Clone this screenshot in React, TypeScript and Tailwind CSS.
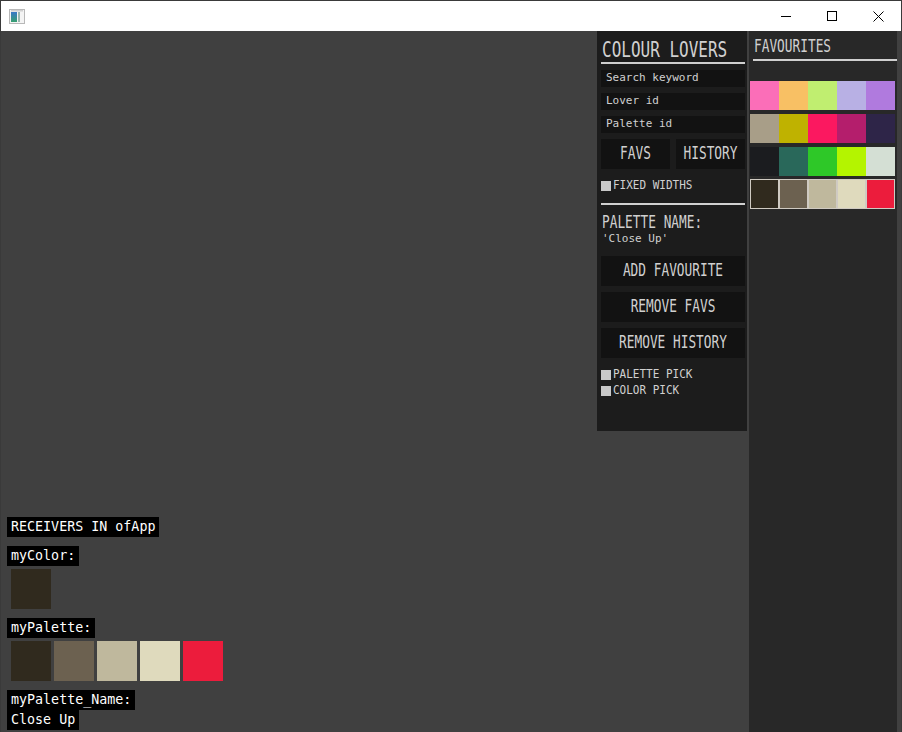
import React from "react";

const favRows = [
  ["#fb6eb8", "#f8c064", "#c0ee70", "#b8b0e4", "#b07ade"],
  ["#a89e88", "#bfb200", "#fb1860", "#b41e6c", "#2e2548"],
  ["#1b1c1f", "#29685a", "#2ec828", "#b4f400", "#d4dfd4"],
];

const palette = ["#302a1e", "#6c6150", "#bfb89d", "#dfdabd", "#ec1c3c"];

const Tall = ({ children, big }: { children: React.ReactNode; big?: boolean }) => (
  <span
    className={
      big
        ? "inline-block text-[16px] leading-[24px] scale-y-[1.3]"
        : "inline-block text-[12.8px] leading-[20px] scale-y-[1.35]"
    }
  >
    {children}
  </span>
);

const Field = ({ label }: { label: string }) => (
  <div className="mt-[6px] flex h-[17px] items-center bg-[#121212] pl-[5px] text-[11px] text-[#d0d0d0]">
    {label}
  </div>
);

const Button = ({ label, className = "" }: { label: string; className?: string }) => (
  <div
    className={`flex h-[30px] items-center justify-center bg-[#121212] text-[#d0d0d0] ${className}`}
  >
    <Tall>{label}</Tall>
  </div>
);

const Check = ({ label, className = "" }: { label: string; className?: string }) => (
  <div className={`flex h-[10px] items-center gap-[2px] ${className}`}>
    <div className="h-[10px] w-[10px] bg-[#c8c8c8]" />
    <span className="inline-block text-[11px] leading-[12px] scale-y-110 text-[#d0d0d0]">
      {label}
    </span>
  </div>
);

const Label = ({ text }: { text: string }) => (
  <div className="h-[20px] self-start bg-black px-[4px] text-[13.33px] leading-[20px] text-white">
    {text}
  </div>
);

function TitleBar() {
  return (
    <div className="flex h-[30px] items-center bg-white">
      <svg width="16" height="15" viewBox="0 0 16 15" className="ml-[8px]">
        <rect x="0.5" y="0.5" width="15" height="14" fill="#f4f4f4" stroke="#b8b8b8" />
        <rect x="2" y="3" width="6" height="10" fill="url(#g)" />
        <rect x="9" y="3" width="2" height="10" fill="#9ab8b0" />
        <rect x="2" y="1" width="12" height="1.5" fill="#d0d0d0" />
        <defs>
          <linearGradient id="g" x1="0" y1="0" x2="0" y2="1">
            <stop offset="0" stopColor="#3a78c8" />
            <stop offset="1" stopColor="#38a070" />
          </linearGradient>
        </defs>
      </svg>
      <div className="ml-auto flex h-full">
        <div className="flex w-[46px] items-center justify-center">
          <svg width="10" height="10" viewBox="0 0 10 10">
            <path d="M0 5.5h10" stroke="#000" strokeWidth="1" />
          </svg>
        </div>
        <div className="flex w-[46px] items-center justify-center">
          <svg width="10" height="10" viewBox="0 0 10 10">
            <rect x="0.5" y="0.5" width="9" height="9" fill="none" stroke="#000" strokeWidth="1" />
          </svg>
        </div>
        <div className="flex w-[46px] items-center justify-center">
          <svg width="11" height="11" viewBox="0 0 11 11">
            <path d="M0.5 0.5l10 10M10.5 0.5l-10 10" stroke="#000" strokeWidth="1" />
          </svg>
        </div>
      </div>
    </div>
  );
}

function ColourLovers() {
  return (
    <div className="flex h-[400px] w-[150px] shrink-0 flex-col bg-[#1c1c1c] pl-[4px] pr-[2px] text-[#d0d0d0]">
      <div className="flex h-[31px] items-center pt-[6px] pl-[1px]">
        <Tall big>COLOUR LOVERS</Tall>
      </div>
      <div className="h-[2px] bg-[#d0d0d0]" />
      <Field label="Search keyword" />
      <Field label="Lover id" />
      <Field label="Palette id" />
      <div className="mt-[6px] flex gap-[6px]">
        <Button label="FAVS" className="flex-1" />
        <Button label="HISTORY" className="flex-1" />
      </div>
      <Check label="FIXED WIDTHS" className="mt-[12px]" />
      <div className="mt-[12px] h-[2px] bg-[#d0d0d0]" />
      <div className="mt-[8px] flex h-[20px] items-center pl-[1px]">
        <Tall>PALETTE NAME:</Tall>
      </div>
      <div className="flex h-[13px] items-center pl-[1px] text-[11px]">'Close Up'</div>
      <Button label="ADD FAVOURITE" className="mt-[10px]" />
      <Button label="REMOVE FAVS" className="mt-[6px]" />
      <Button label="REMOVE HISTORY" className="mt-[6px]" />
      <Check label="PALETTE PICK" className="mt-[12px]" />
      <Check label="COLOR PICK" className="mt-[6px]" />
    </div>
  );
}

function Favourites() {
  return (
    <div className="ml-[2px] flex w-[148px] shrink-0 flex-col bg-[#282828] text-[#d0d0d0]">
      <div className="flex h-[28px] items-center pt-[4px] pl-[5px]">
        <Tall>FAVOURITES</Tall>
      </div>
      <div className="ml-[4px] h-[2px] bg-[#d0d0d0]" />
      <div className="ml-[1px] mt-[20px] flex flex-col gap-[4px]">
        {favRows.map((row, i) => (
          <div key={i} className="flex">
            {row.map((c) => (
              <div key={c} className="h-[29px] w-[29px]" style={{ backgroundColor: c }} />
            ))}
          </div>
        ))}
      </div>
      <div className="ml-[1px] mt-[3px] flex">
        {palette.map((c) => (
          <div
            key={c}
            className="h-[30px] w-[29px] border border-[#cfcac2]"
            style={{ backgroundColor: c }}
          />
        ))}
      </div>
    </div>
  );
}

function Receivers() {
  return (
    <div className="flex flex-1 flex-col justify-end pb-[2px] pl-[6px]">
      <Label text="RECEIVERS IN ofApp" />
      <div className="mt-[9px] flex flex-col">
        <Label text="myColor:" />
      </div>
      <div className="ml-[4px] mt-[3px] h-[40px] w-[40px] bg-[#302a1e]" />
      <div className="mt-[9px] flex flex-col">
        <Label text="myPalette:" />
      </div>
      <div className="ml-[4px] mt-[3px] flex gap-[3px]">
        {palette.map((c) => (
          <div key={c} className="h-[40px] w-[40px]" style={{ backgroundColor: c }} />
        ))}
      </div>
      <div className="mt-[9px] flex flex-col">
        <Label text="myPalette_Name:" />
        <Label text="Close Up" />
      </div>
    </div>
  );
}

export default function App() {
  return (
    <div className="flex h-[732px] w-[902px] flex-col border-x border-t border-[#3a3a3a] font-['DejaVu_Sans_Mono',monospace]">
      <TitleBar />
      <div className="flex flex-1 bg-[#404040] pr-[4px]">
        <Receivers />
        <ColourLovers />
        <Favourites />
      </div>
    </div>
  );
}
